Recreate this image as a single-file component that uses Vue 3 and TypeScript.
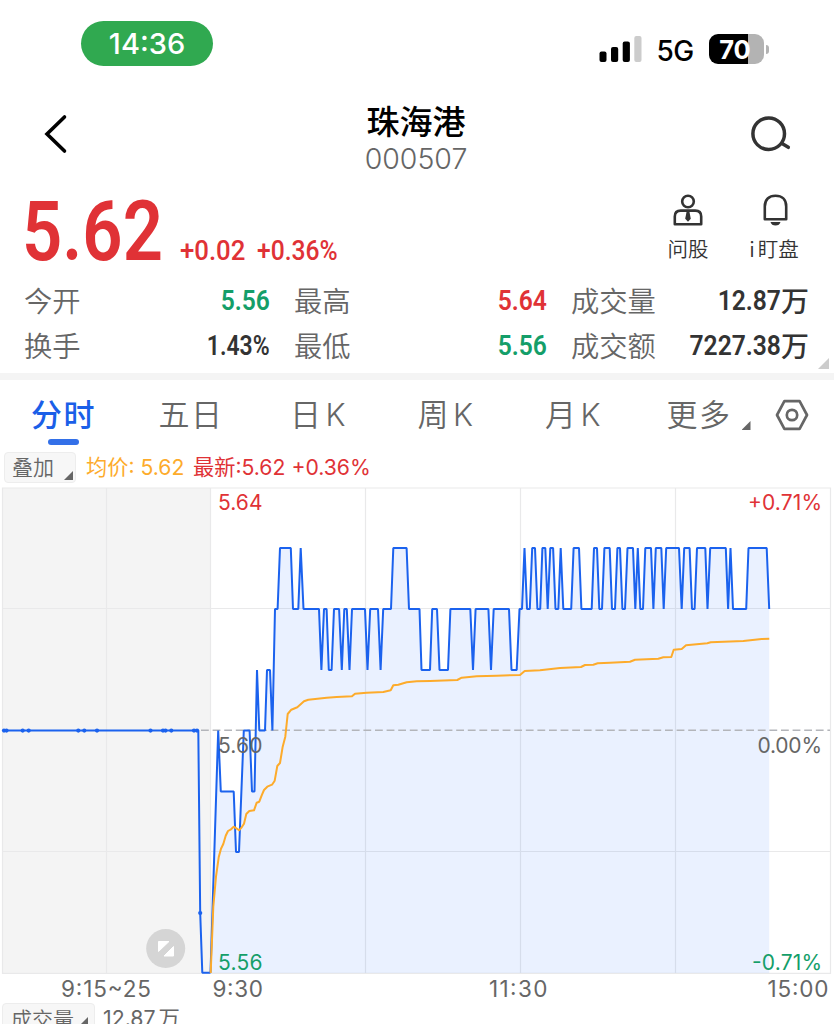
<script setup lang="ts">
interface Metric {
  label: string
  value: string
  tone: 'up' | 'down' | 'plain'
  unit?: string
}

const metrics: Metric[] = [
  { label: '今开', value: '5.56', tone: 'down' },
  { label: '最高', value: '5.64', tone: 'up' },
  { label: '成交量', value: '12.87', unit: '万', tone: 'plain' },
  { label: '换手', value: '1.43%', tone: 'plain' },
  { label: '最低', value: '5.56', tone: 'down' },
  { label: '成交额', value: '7227.38', unit: '万', tone: 'plain' },
]

const tabs: string[] = ['分时', '五日', '日K', '周K', '月K']

// y coordinate of each traded price
const level: Record<string, number> = {
  '5.63': 548,
  '5.62': 609,
  '5.61': 670,
  '5.60': 730.5,
  '5.59': 791.5,
  '5.58': 852,
  '5.56': 972.5,
}

type Run = [from: number, to: number, price: string]

const runs: Run[] = [
  [210.5, 210.5, '5.56'],
  [218.2, 218.2, '5.60'], [220.8, 233.7, '5.59'], [236, 239, '5.58'], [243.8, 249.6, '5.60'],
  [252, 254.5, '5.59'], [257, 257, '5.61'], [259.3, 265, '5.60'], [267, 270, '5.61'],
  [272.4, 272.4, '5.60'], [275, 277.6, '5.62'], [280, 290.8, '5.63'], [293, 298.3, '5.62'],
  [300.7, 300.7, '5.63'], [303.5, 319, '5.62'], [321.4, 321.4, '5.61'], [324, 326.6, '5.62'],
  [328.8, 331.6, '5.61'], [334, 339.1, '5.62'], [341.8, 341.8, '5.61'], [344.3, 346.8, '5.62'],
  [349.5, 349.5, '5.61'], [352, 365, '5.62'], [367.5, 367.5, '5.61'], [370.2, 378, '5.62'],
  [380.6, 380.6, '5.61'], [383.2, 391, '5.62'], [393.3, 406.6, '5.63'], [409, 419.5, '5.62'],
  [421.5, 430, '5.61'], [432.2, 437, '5.62'], [439.5, 448, '5.61'], [450.4, 470.3, '5.62'],
  [473, 473, '5.61'], [475.6, 488.4, '5.62'], [491, 491, '5.61'], [493.7, 509, '5.62'],
  [511.5, 516.7, '5.61'], [519.5, 522, '5.62'], [524.5, 524.5, '5.63'], [527, 529.8, '5.62'],
  [532.2, 535, '5.63'], [537.4, 540.2, '5.62'], [542.4, 545.3, '5.63'], [547.7, 547.7, '5.62'],
  [550.3, 553.1, '5.63'], [555.5, 558.3, '5.62'], [560.7, 560.7, '5.63'], [563.3, 571.2, '5.62'],
  [573.6, 579, '5.63'], [581.4, 591.7, '5.62'], [594, 597, '5.63'], [599.3, 602, '5.62'],
  [604.4, 609.7, '5.63'], [612, 615, '5.62'], [617.4, 620, '5.63'], [622.4, 625, '5.62'],
  [627.5, 633, '5.63'], [635.3, 635.3, '5.62'], [637.8, 637.8, '5.63'], [640.3, 643, '5.62'],
  [645.3, 651, '5.63'], [653.4, 653.4, '5.62'], [655.8, 661.3, '5.63'], [663.7, 663.7, '5.62'],
  [666.2, 679, '5.63'], [681.7, 681.7, '5.62'], [684.2, 689.6, '5.63'], [692, 694.6, '5.62'],
  [697, 705.3, '5.63'], [707.5, 707.5, '5.62'], [710.2, 725.8, '5.63'], [728.1, 728.1, '5.62'],
  [730.5, 730.5, '5.63'], [733, 746.2, '5.62'], [748.5, 766.7, '5.63'], [769.2, 769.2, '5.62'],
]

const priceLine: string = runs
  .map(([from, to, price]) => {
    const y = level[price]
    return from === to ? `${from},${y}` : `${from},${y} ${to},${y}`
  })
  .join(' ')

const priceArea: string = `${priceLine} 769.2,973 210.5,973`

const averageLine: string = [
  '210.7,973 213.3,906.7 216,876.7 218.7,857.3 221,848.7 223.3,844 225.7,835.7 228,831 231,829.3',
  '233.7,826.7 236.3,828.3 239,830.3 241.7,827.3 244,823.7 246.3,814 249.3,811 254,810.3 256.7,802.7',
  '259.3,801.7 261.7,795.3 264,790 267.3,786.7 272,784.7 274.7,780.7 277.3,766 280,763 282.7,746.7',
  '285.3,736.7 287.7,714 291.3,709.7 297.3,707.3 304,701.3 308.3,699.7 326.7,697.7 336.7,697 352,696.3',
  '355,693.7 366.7,692.7 383.3,692 390.7,690.3 393.3,685.3 398.3,684.7 406.7,682.3 416.7,681.3 430,681',
  '457.3,680 461.7,677.7 476.7,676.3 496.7,675.7 520,675 524.7,671 540,670.3 560,668 581,667 585,665',
  '593.3,664.7 597.7,663.3 610,662.7 630,661.7 635,659.7 658.3,658.7 663.3,657.3 671.3,657 673.7,649.7',
  '681.7,649 686,645.3 707.3,643.3 710.7,642.3 743.3,641 761.7,639 769.3,638.7',
].join(' ')

const auctionDots: number[] = [4, 6.5, 22.7, 28.7, 78.3, 84.3, 97, 150.5, 163, 165.5, 171.3, 194, 197]
const gridX: number[] = [106.5, 210.5, 365.5, 520.5, 675.5]
const gridY: number[] = [608.5, 851.5]
</script>

<template>
  <main class="screen">
    <header class="status">
      <div class="clock"><span>14:36</span></div>
      <div class="status-right">
        <svg class="signal" width="44" height="28" viewBox="0 0 44 28">
          <rect x="0.5" y="16.5" width="7" height="10.5" rx="2" />
          <rect x="12" y="12" width="7.2" height="15" rx="2" />
          <rect x="23.7" y="6.5" width="7.2" height="20.5" rx="2" />
          <rect x="35.3" y="1" width="7.2" height="26" rx="2" fill="#ccc" />
        </svg>
        <span class="network">5G</span>
        <div class="battery"><span>70</span></div>
        <i class="nub"></i>
      </div>
    </header>

    <nav class="nav">
      <svg class="back" width="26" height="42" viewBox="0 0 26 42">
        <path d="M22.5 4 5 21 22.5 38" fill="none" stroke="#000" stroke-width="3.6" stroke-linecap="round" />
      </svg>
      <div class="title">
        <h1>珠海港</h1>
        <p>000507</p>
      </div>
      <svg class="search" width="44" height="42" viewBox="0 0 44 42" fill="none" stroke="#333" stroke-width="3.5" stroke-linecap="round">
        <circle cx="20.7" cy="20.7" r="15.8" />
        <path d="M34 30.5 40.3 34.3" />
      </svg>
    </nav>

    <section class="quote">
      <div class="price"><span>5.62</span></div>
      <div class="change"><span class="delta">+0.02</span><span class="pct">+0.36%</span></div>
      <div class="actions">
        <div class="action ask">
          <svg width="30" height="34" viewBox="0 0 30 34" fill="none" stroke="#333" stroke-width="2.6">
            <circle cx="15" cy="8.5" r="5.8" />
            <path d="M1.8 31.3V23.5Q1.8 17.6 7.7 17.6H22.3Q28.2 17.6 28.2 23.5V31.3Z" stroke-linejoin="round" />
            <path d="M13.6 18.5H16.4L17.8 25.7 15 28.8 12.2 25.7Z" fill="#333" stroke="none" />
          </svg>
          <span>问股</span>
        </div>
        <div class="action watch">
          <svg width="30" height="34" viewBox="0 0 30 34" fill="none" stroke="#333" stroke-width="2.6">
            <path d="M5.8 26.2V13.4C5.8 6.500 10 2.800 16.500 2.800S27.200 6.500 27.200 13.400V26.200Z" stroke-linejoin="round" />
            <path d="M11.500 29H21.500Q20.500 32.600 16.500 32.600Q12.500 32.600 11.500 29Z" fill="#333" stroke="none" />
          </svg>
          <span><em>i</em>盯盘</span>
        </div>
      </div>
    </section>

    <section class="metrics">
      <div v-for="m in metrics" :key="m.label" class="metric">
        <span class="label">{{ m.label }}</span>
        <span class="value" :class="m.tone"><span class="figure" :class="{ ratio: m.value.endsWith('%') }">{{ m.value }}</span><b v-if="m.unit">{{ m.unit }}</b></span>
      </div>
      <i class="corner expand"></i>
    </section>

    <div class="band"></div>

    <div class="tabs">
      <button v-for="(t, i) in tabs" :key="t" :class="{ active: i === 0, kline: t.endsWith('K') }">{{ t.replace('K', '') }}<span v-if="t.endsWith('K')">K</span></button>
      <button class="more">更多<i class="corner"></i></button>
      <svg class="settings" width="34" height="32" viewBox="0 0 34 32" fill="none" stroke="#666" stroke-width="2.7">
        <path d="M9.4 2.2H24.6L32 16 24.6 29.8H9.4L2 16Z" stroke-linejoin="round" />
        <circle cx="17" cy="16" r="5.2" />
      </svg>
    </div>

    <div class="legend">
      <div class="chip">叠加<i class="corner"></i></div>
      <span class="avg">均价: <b>5.62</b></span>
      <span class="last">最新:<b>5.62 +0.36%</b></span>
    </div>

    <svg class="chart" width="834" height="515" viewBox="0 487 834 515">
      <rect x="2" y="488" width="208.5" height="485.5" fill="#f4f4f4" />
      <g stroke="#e9e9ea" stroke-width="1.2" fill="none">
        <path d="M2.5 488H830.5V973.3H2.5Z" />
        <path v-for="y in gridY" :key="'y' + y" :d="`M2 ${y}H830`" />
        <path v-for="x in gridX" :key="'x' + x" :d="`M${x} 488V973`" />
      </g>
      <polygon :points="priceArea" fill="#1b62ff" fill-opacity="0.09" />
      <path d="M201 730.2H830" stroke="#b3b5ba" stroke-width="1.5" stroke-dasharray="7.8 3.8" />
      <g class="axis">
        <text x="218" y="510" textLength="44.5" class="up">5.64</text>
        <text x="822" y="510" text-anchor="end" textLength="74" class="up">+0.71%</text>
        <text x="822" y="753" text-anchor="end" textLength="64.5">0.00%</text>
        <text x="218" y="970" textLength="44.5" class="down">5.56</text>
        <text x="822" y="970" text-anchor="end" textLength="70" class="down">-0.71%</text>
      </g>
      <g fill="none" stroke="#1b62ee" stroke-width="2" stroke-linejoin="bevel">
        <polyline points="3,730.5 198.3,730.5 200.2,913 202.3,972.7 210.5,972.7" />
        <polyline :points="priceLine" />
      </g>
      <g fill="#1b62ee">
        <circle v-for="x in auctionDots" :key="x" :cx="x" cy="730.6" r="2.1" />
        <circle cx="200.2" cy="913" r="2.1" />
      </g>
      <polyline :points="averageLine" fill="none" stroke="#fdab2b" stroke-width="2" stroke-linejoin="round" />
      <text class="axis" x="218" y="753" textLength="44.5">5.60</text>
      <circle cx="165.7" cy="948.5" r="19.5" fill="#d5d5d5" />
      <path d="M158.5 941.500H169L158.500 951.500ZM173.500 946.500V956H164Z" fill="#fff" stroke="#fff" stroke-linejoin="round" />
      <g class="times">
        <text x="61" y="996.5" textLength="90">9:15~25</text>
        <text x="212.5" y="996.5" textLength="50.5">9:30</text>
        <text x="489" y="996.5" textLength="58.5">11:30</text>
        <text x="767.5" y="996.5" textLength="61">15:00</text>
      </g>
    </svg>

    <div class="volume">
      <div class="chip">成交量<i class="corner"></i></div>
      <span>12.87<em>万</em></span>
    </div>
  </main>
</template>

<style>
body {
  margin: 0;
  background: #fff;
}
</style>

<style scoped>
* {
  box-sizing: border-box;
}
.screen {
  width: 834px;
  height: 1024px;
  overflow: hidden;
  background: #fff;
  color: #666;
  font-family: Inter, 'Noto Sans CJK SC', sans-serif;
}
.status {
  display: flex;
  justify-content: space-between;
  height: 100px;
  padding: 21px 65px 0 81px;
}
.clock {
  width: 132px;
  height: 45px;
  border-radius: 22.5px;
  background: #30a950;
  color: #fff;
  font-size: 29px;
  font-weight: 500;
  line-height: 46px;
  text-align: center;
}
.status-right {
  display: flex;
  align-items: center;
  height: 56px;
}
.signal {
  margin-right: 14px;
}
.network {
  width: 52px;
  padding-top: 3px;
  color: #000;
  font-size: 28px;
  font-weight: 500;
  line-height: 34px;
  letter-spacing: -0.5px;
}
.battery {
  width: 55px;
  height: 30px;
  padding-right: 2px;
  border-radius: 9px;
  background: linear-gradient(90deg, #000 39px, #b3b3b3 39px);
  color: #fff;
  font-size: 25.5px;
  font-weight: 700;
  line-height: 31px;
  text-align: center;
}
.nub {
  width: 3.5px;
  height: 9px;
  margin-left: 2px;
  border-radius: 0 5px 5px 0;
  background: #b3b3b3;
}
.nav {
  display: flex;
  justify-content: space-between;
  height: 85px;
  padding: 0 42px 0 42px;
}
.back,
.search {
  margin-top: 13px;
}
.title {
  padding-right: 20px;
  margin-left: 36px;
  text-align: center;
}
.title h1 {
  margin: 0;
  color: #000;
  font: 500 33px/40px 'Noto Sans CJK SC', sans-serif;
}
.title p {
  margin: 0;
  padding-top: 1px;
  font-size: 28.5px;
  font-weight: 350;
  line-height: 35px;
}
.quote {
  display: flex;
  height: 94px;
  color: #e03236;
  font-family: Roboto, sans-serif;
}
.price {
  width: 180px;
  padding: 1px 0 0 22px;
}
.price span {
  display: inline-block;
  font-size: 84px;
  font-weight: 600;
  line-height: 92px;
  transform: scaleX(0.84);
  transform-origin: left;
}
.change {
  width: 469px;
  padding-top: 49px;
  font-size: 28px;
  font-weight: 500;
  line-height: 34px;
}
.change span {
  display: inline-block;
  transform-origin: left;
}
.delta {
  width: 77px;
  transform: scaleX(0.92);
}
.pct {
  transform: scaleX(0.88);
}
.actions {
  display: flex;
  color: #333;
  font: 350 20.5px/26px 'Noto Sans CJK SC', sans-serif;
}
.action {
  display: flex;
  flex-direction: column;
  align-items: center;
  width: 78px;
  padding-top: 8px;
}
.action svg {
  margin-bottom: 8px;
}
.watch {
  margin-left: 8px;
}
.action em {
  margin-right: 3px;
  font-style: normal;
}
.metrics {
  position: relative;
  display: grid;
  grid-template-columns: 246px 253px 238px;
  grid-auto-rows: 45px;
  column-gap: 24px;
  height: 94px;
  padding-left: 24px;
}
.metric {
  display: flex;
  justify-content: space-between;
  font-size: 28px;
  line-height: 44px;
}
.label {
  font-family: 'Noto Sans CJK SC', sans-serif;
  font-size: 28.3px;
  font-weight: 350;
  line-height: 42px;
}
.value {
  display: flex;
  color: #333;
}
.figure {
  font-family: Roboto, sans-serif;
  font-weight: 600;
  transform: scaleX(0.88);
  transform-origin: right;
}
.figure.ratio {
  transform: scaleX(0.82);
}
.value b {
  font-family: 'Noto Sans CJK SC', sans-serif;
  font-weight: 500;
  line-height: 42px;
}
.value.up {
  color: #e03236;
}
.value.down {
  color: #149e69;
}
.corner {
  display: inline-block;
  flex: none;
  width: 9px;
  height: 9px;
  background: #666;
  clip-path: polygon(100% 0, 100% 100%, 0 100%);
}
.expand {
  position: absolute;
  right: 5px;
  bottom: 4px;
  width: 11px;
  height: 11px;
  background: #ccc;
}
.band {
  height: 7px;
  background: #f4f4f4;
}
.tabs {
  display: flex;
  align-items: flex-start;
  height: 72px;
  padding-left: 31px;
}
.tabs button {
  position: relative;
  flex: none;
  width: 127.5px;
  height: 66px;
  padding: 0;
  border: 0;
  background: none;
  color: #666;
  font: 350 31px/66px 'Noto Sans CJK SC', sans-serif;
  letter-spacing: 1.5px;
  text-align: left;
  white-space: nowrap;
}
.tabs .kline {
  padding-left: 4px;
}
.tabs .kline span {
  margin-left: 3px;
  font-family: Inter, sans-serif;
}
.tabs .active {
  color: #1b5fe8;
  font-weight: 500;
}
.active::after {
  position: absolute;
  bottom: 1px;
  left: 17px;
  width: 31px;
  height: 6px;
  border-radius: 3px;
  background: #3370e8;
  content: '';
}
.tabs .more {
  width: 109px;
  margin-left: -2px;
}
.more .corner {
  margin-left: 10px;
  vertical-align: -4px;
}
.settings {
  margin-top: 19px;
  margin-left: -1px;
}
.legend {
  display: flex;
  align-items: center;
  height: 35px;
  padding: 0 0 4px 4px;
  font-size: 21.2px;
  line-height: 26px;
}
.chip {
  display: flex;
  align-items: flex-end;
  justify-content: space-between;
  width: 72px;
  height: 31px;
  padding: 0 2px 2px 7px;
  border: 1px solid #ededed;
  border-radius: 4px;
  background: #f7f7f7;
  font: 350 21px/28px 'Noto Sans CJK SC', sans-serif;
}
.legend b {
  font-weight: 400;
}
.avg {
  width: 107px;
  margin-left: 10px;
  padding-bottom: 2px;
  color: #fdab2b;
}
.last {
  padding-bottom: 2px;
  color: #e03236;
}
.chart {
  display: block;
}
.axis {
  fill: #666;
  font-size: 21px;
}
.axis .up {
  fill: #e03236;
}
.axis .down {
  fill: #149e69;
}
.times {
  fill: #666;
  font-size: 22.5px;
}
.volume {
  display: flex;
  height: 31px;
  padding: 1px 0 0 2px;
  font-size: 21.3px;
  line-height: 30px;
}
.volume .chip {
  align-items: flex-start;
  width: 93px;
  margin-right: 8px;
  padding: 0 6px 0 8px;
}
.volume .corner {
  margin-top: 13px;
}
.volume em {
  margin-left: 3px;
  font-style: normal;
}
</style>
